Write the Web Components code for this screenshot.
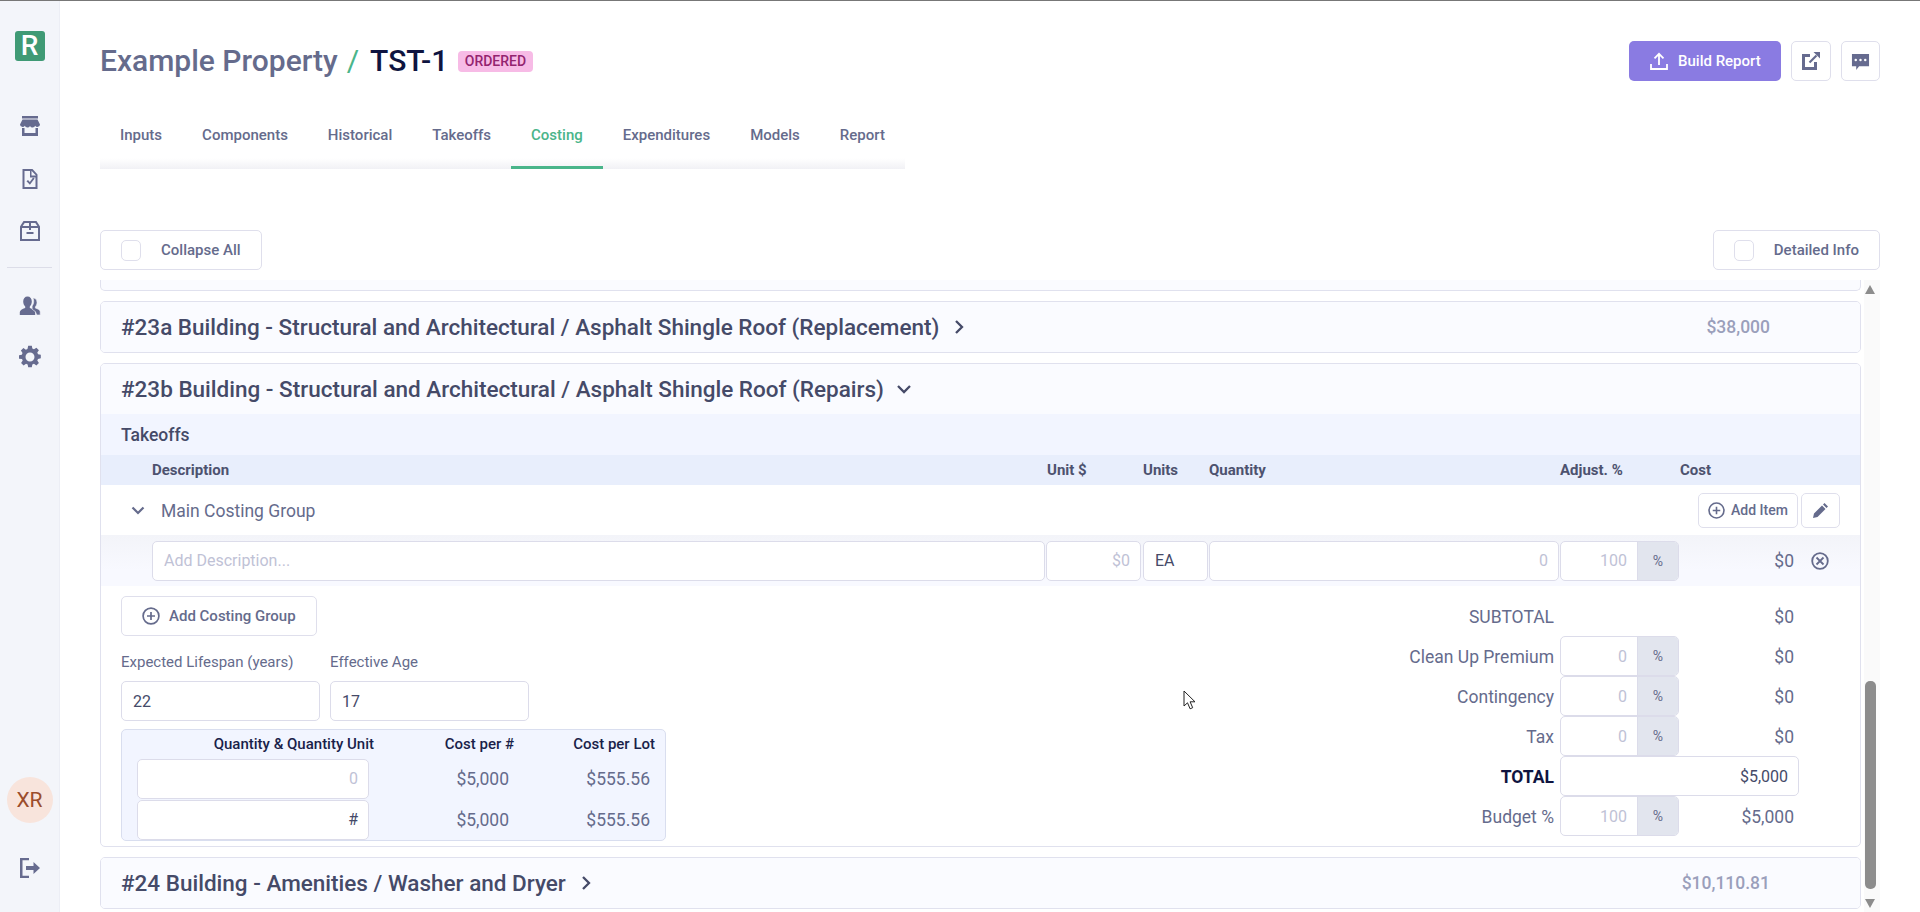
<!DOCTYPE html>
<html lang="en"><head><meta charset="utf-8"><title>Costing</title>
<style>
html,body{margin:0;height:100%;overflow:hidden;background:#fff;font-family:Roboto,"Liberation Sans",sans-serif;color:#656b8c}
</style></head>
<body>
<rs-app></rs-app>
<script>
const ICON={
store:'<path d="M4 2h16v2.500H4z"/><path d="M4.500 5.500h15L22 10.500a2.600 2.600 0 0 1-4.800 1.200A2.800 2.800 0 0 1 14.500 13.500 2.800 2.800 0 0 1 12 12a2.800 2.800 0 0 1-2.500 1.500 2.800 2.800 0 0 1-2.700-1.800A2.600 2.600 0 0 1 2 10.500z"/><path fill-rule="evenodd" d="M4 14h2.500v5h11v-5H20v8H4z"/>',
doc:'<path fill-rule="evenodd" d="M4.500 2h10L19.500 7.500V22h-15zM13.500 3.800V8.500h4.500zM6.500 9.500V20h11V10.500h-5.500V4h-5.500z"/><path d="M8.500 14.200l1.500-1.300 1.800 2 3.300-4.400 1.500 1.100-4.700 6.100z"/>',
box:'<path fill-rule="evenodd" d="M5.500 2h13L22 7.500V22H2V7.500zM6.700 4L4.600 7H11V4zM13 4v3h6.400l-2.100-3zM4 9v11h16V9h-7v2h-2V9z"/><path d="M8.500 13h7v2h-7z"/>',
users:'<path d="M9.500 2.500c2.700 0 4.300 2.100 4.300 5 0 2.200-.9 4-2 5v1.600c3 .8 5.400 2.400 5.400 4.200V21H1.800v-2.700c0-1.800 2.400-3.400 5.400-4.200v-1.600c-1.100-1-2-2.800-2-5 0-2.900 1.700-5 4.300-5z"/><path d="M15.500 4c2.200.2 3.500 2 3.500 4.400 0 1.900-.7 3.400-1.600 4.300v1.400c2.500.7 4.800 2.100 4.800 3.700V21h-3.400l-1.500-3.400-3.200-2.400V12c1-1.200 1.600-2.900 1.600-4.600 0-1.300-.2-2.400-.7-3.400z" stroke="#f3f5fa" stroke-width=".6"/>',
cog:'<path fill-rule="evenodd" d="M10 1.500h4l.6 3.100 1.800.8 2.700-1.800 2.800 2.800-1.800 2.700.8 1.800 3.100.6v4l-3.100.6-.8 1.800 1.800 2.700-2.800 2.800-2.700-1.800-1.800.8-.6 3.100h-4l-.6-3.100-1.800-.8-2.700 1.800-2.800-2.800 1.800-2.700-.8-1.800L-.2 16v-4l3.100-.6.8-1.800-1.800-2.700 2.800-2.800 2.700 1.800 1.800-.8zM12 9a5 5 0 1 0 0 10 5 5 0 0 0 0-10z" transform="translate(1.200 -.6) scale(.9)"/>',
logout:'<path d="M2 2h9v2.200H4.500v15.600H11V22H2z"/><path d="M15.500 6l6.500 6-6.500 6v-4H8v-4h7.500z"/>'
};
const svg=(n,s)=>`<svg width="${s}" height="${s}" viewBox="0 0 24 24" fill="currentColor" aria-hidden="true">${ICON[n]}</svg>`;
const PLUS=s=>`<svg width="${s}" height="${s}" viewBox="0 0 18 18" fill="none" stroke="currentColor" stroke-width="1.700" aria-hidden="true"><circle cx="9" cy="9" r="7.900"/><path d="M9 5v8M5 9h8"/></svg>`;
const def=(name,html)=>customElements.define(name,class extends HTMLElement{
  constructor(){super();this.attachShadow({mode:'open'});}
  connectedCallback(){if(this._d)return;this._d=1;this.shadowRoot.innerHTML=typeof html==='function'?html(this):html;}
});

def('rs-sidebar',`<style>
:host{display:flex;flex-direction:column;align-items:center;width:59px;flex:none;background:#f3f5fa;border-right:1px solid #eceef5;color:#666b8f;height:100%}
.logo{width:30px;height:30px;border-radius:3px;background:#3f9a75;color:#fff;font:500 28px/30px Roboto,sans-serif;text-align:center;margin-top:30px}
.i{display:flex;height:24px}
hr{width:45px;height:1px;border:0;background:#dcdde8;margin:0}
.av{width:46px;height:46px;border-radius:50%;background:#f8e4dc;color:#9b4d2c;font:400 21px/46px Roboto,sans-serif;text-align:center;margin-top:auto}
</style>
<div class="logo">R</div>
<div class="i" style="margin-top:53px">${svg('store',24)}</div>
<div class="i" style="margin-top:29px">${svg('doc',24)}</div>
<div class="i" style="margin-top:28px">${svg('box',24)}</div>
<hr style="margin-top:24px">
<div class="i" style="margin-top:26px">${svg('users',24)}</div>
<div class="i" style="margin-top:27px">${svg('cog',24)}</div>
<div class="av">XR</div>
<div class="i" style="margin-top:33px;margin-bottom:32px">${svg('logout',24)}</div>`);

def('rs-header',`<style>
:host{display:flex;align-items:center;height:40px}
.t{font:500 30px/40px Roboto,sans-serif;color:#656b8c;white-space:nowrap}
.s{color:#4ab58a;font-weight:400;margin:0 11px 0 9px}
.d{color:#0f1440}
.b{margin-left:10px;background:#f7bbe6;color:#93246f;font:500 14px/21px Roboto,sans-serif;height:21px;padding:0 6.500px;border-radius:4px}
.r{margin-left:auto;display:flex;gap:10px}
.p{display:flex;align-items:center;gap:9px;height:40px;width:152px;box-sizing:border-box;padding-left:20px;background:#8a7be2;color:#fff;border-radius:5px;font:500 15px Roboto,sans-serif}
.k{width:40px;height:40px;box-sizing:border-box;border:1px solid #dfdfec;border-radius:5px;display:flex;align-items:center;justify-content:center;color:#666b8f}
</style>
<div class="t">Example Property<span class="s">/</span><span class="d">TST-1</span></div><span class="b">ORDERED</span>
<div class="r"><div class="p"><svg width="20" height="20" viewBox="0 0 20 20" fill="none" stroke="#fff" stroke-width="1.800"><path d="M10 14V3M5.500 7.300L10 2.800l4.500 4.500M2 13v5h16v-5"/></svg>Build Report</div>
<div class="k"><svg width="20" height="20" viewBox="0 0 20 20" fill="currentColor"><path fill-rule="evenodd" d="M1 3h8v3H4v10h9v-5h3v8H1z"/><path d="M12.500 1H19v6.500z"/><path d="M8.500 11.500L15.500 4.500" fill="none" stroke="currentColor" stroke-width="2.200"/></svg></div>
<div class="k" style="width:39px"><svg width="19" height="19" viewBox="0 0 20 20" fill="currentColor"><path fill-rule="evenodd" d="M1 2h18v13H8.500l-3 4v-4H1zM5 7.200a1.300 1.300 0 1 0 0 2.600 1.300 1.300 0 0 0 0-2.600zm5 0a1.300 1.300 0 1 0 0 2.600 1.300 1.300 0 0 0 0-2.600zm5 0a1.300 1.300 0 1 0 0 2.600 1.300 1.300 0 0 0 0-2.600z"/></svg></div></div>`);

def('rs-tabs',()=>`<style>
:host{display:flex;width:805px;height:67px;margin-top:21px;background:linear-gradient(#fff 0,#fff 84%,#f1f1f5 100%)}
div{padding:0 20px;font:500 15px/66px Roboto,sans-serif;color:#656b8c;box-sizing:border-box;height:67px}
.a{color:#4ab58a;border-bottom:3px solid #4ab58a}
</style>${['Inputs','Components','Historical','Takeoffs','Costing','Expenditures','Models','Report'].map(t=>`<div class="${t=='Costing'?'a':''}">${t}</div>`).join('')}`);

def('rs-check',`<style>
:host{display:flex;align-items:center;height:40px;box-sizing:border-box;border:1px solid #dfdfec;border-radius:5px;padding:0 20px;font:500 15px Roboto,sans-serif;color:#656b8c;gap:20px;background:#fff}
i{display:block;width:20px;height:21px;box-sizing:border-box;border:1px solid #dfdfec;border-radius:5px}
</style><i></i><slot></slot>`);

def('rs-toolbar',`<style>:host{display:flex;justify-content:space-between;margin-top:61px}</style><slot></slot>`);

def('rs-scrollbar',`<style>
:host{display:flex;flex-direction:column;align-items:flex-start;width:19px;flex:none;background:linear-gradient(90deg,#fff 3px,#fafafa 3px);padding:5px 0 0 4px;box-sizing:border-box;height:632px}
.ar{width:0;height:0;border-left:5.500px solid transparent;border-right:5.500px solid transparent}
.u{border-bottom:9px solid #8c8c8c}
.d{border-top:9px solid #8c8c8c;margin-top:10px}
.t{width:11px;height:208px;border-radius:5px;background:#8c8c8c;margin-top:387px}
</style><div class="ar u"></div><div class="t"></div><div class="ar d"></div>`);

def('rs-card',e=>{
 const open=e.hasAttribute('open');
 const chev=open?'<path d="M2 5l6 6 6-6"/>':'<path d="M5 2l6 6-6 6"/>';
 return `<style>
:host{display:block;border:1px solid #e0e1ee;border-radius:5px;overflow:hidden;background:#fff}
header{display:flex;align-items:center;height:50px;background:#fafbff;padding-left:20px;font:500 22.500px Roboto,sans-serif;color:#454a68;white-space:nowrap}
svg{margin-left:12px}
.am{margin-left:auto;margin-right:90px;font:500 17.500px Roboto,sans-serif;color:#9a9fbb}
</style><header>${e.getAttribute('heading')}<svg width="16" height="16" viewBox="0 0 16 16" fill="none" stroke="#454a68" stroke-width="2.300">${chev}</svg>${e.getAttribute('amount')?`<span class="am">${e.getAttribute('amount')}</span>`:''}</header><slot></slot>`;
});

def('rs-field',e=>`<style>
:host{display:flex;height:40px;box-sizing:border-box;border:1px solid #dcdcea;border-radius:5px;background:#fff;overflow:hidden;font:400 16px Roboto,sans-serif;color:#454a68}
.v{flex:1;display:flex;align-items:center;padding:0 10px 0 11px;min-width:0}
:host([right]) .v{justify-content:flex-end}
:host([ph]) .v{color:#bfc2d6}
.x{width:41px;flex:none;background:#e2e5ee;border-left:1px solid #dcdcea;box-sizing:border-box;display:flex;align-items:center;justify-content:center;font-size:14px;color:#656b8c}
</style><div class="v"><slot></slot></div>${e.hasAttribute('pct')?'<div class="x">%</div>':''}`);

def('rs-takeoffs',()=>`<style>
:host{display:block}
.band{height:41px;background:#f2f5ff;padding-left:20px;font:500 17.500px/43px Roboto,sans-serif;color:#454a68}
.g{display:grid;grid-template-columns:894px 97px 66px 351px 120px 120px 1fr;padding-left:51px}
.h{height:30px;background:#e8eefc;font:700 15px/30px Roboto,sans-serif;color:#4d526f;align-items:center}
.gr{display:flex;align-items:center;height:50px;font:400 17.500px Roboto,sans-serif;color:#656b8c}
.gr svg.c{margin:0 16px 0 30px}
.gr .n{padding-top:2px}
.bt{margin-left:auto;display:flex;gap:3px;margin-right:20px}
.b{height:35px;box-sizing:border-box;border:1px solid #dfdfec;border-radius:5px;display:flex;align-items:center;justify-content:center;gap:6px;font:500 14px Roboto,sans-serif;background:#fff}
.row{height:51px;align-items:center;background:linear-gradient(#f3f4f9,#f8f9ff 70%);box-sizing:border-box}
.row rs-field{margin-right:1px}
.cost{font:400 17.500px Roboto,sans-serif;text-align:right;padding-right:6px}
.cl{margin-left:11px;display:flex}
.u{margin-right:2px !important}
</style>
<div class="band">Takeoffs</div>
<div class="g h"><span>Description</span><span style="padding-left:1px">Unit $</span><span>Units</span><span>Quantity</span><span>Adjust. %</span><span>Cost</span></div>
<div class="gr"><svg class="c" width="14" height="14" viewBox="0 0 14 14" fill="none" stroke="#656b8c" stroke-width="2.200"><path d="M1.500 4.500L7 10l5.500-5.500"/></svg><span class="n">Main Costing Group</span>
<div class="bt"><div class="b" style="width:100px">${PLUS(17)}Add Item</div><div class="b" style="width:39px"><svg width="17" height="17" viewBox="0 0 17 17" fill="currentColor"><path d="M1 16l1-4.500 8-8 3.500 3.500-8 8zM11 2.500L12.500 1 16 4.500 14.500 6z"/></svg></div></div></div>
<div class="g row"><rs-field ph>Add Description...</rs-field><rs-field ph right class="u">$0</rs-field><rs-field>EA</rs-field><rs-field ph right>0</rs-field><rs-field ph right pct>100</rs-field><div class="cost">$0</div>
<div class="cl"><svg width="18" height="18" viewBox="0 0 18 18" fill="none" stroke="#656b8c" stroke-width="1.800"><circle cx="9" cy="9" r="7.800"/><path d="M5.500 5.500l7 7M12.500 5.500l-7 7"/></svg></div></div>
<slot></slot>`);

def('rs-summary',()=>`<style>
:host{display:grid;grid-template-columns:206px 119px 120px;grid-auto-rows:40px;align-items:center;margin-left:auto;margin-right:61px;font:400 17.500px Roboto,sans-serif;color:#656b8c;width:445px;align-self:flex-start}
.l{text-align:right;padding:2px 6px 0 0;grid-column:1;white-space:nowrap}
.a{grid-column:3;text-align:right;padding:2px 5px 0 0}
.tl{font-weight:700;color:#0f1440}
.tot{grid-column:2 / span 2}
</style>
<div class="l">SUBTOTAL</div><div class="a">$0</div>
<div class="l">Clean Up Premium</div><rs-field ph right pct>0</rs-field><div class="a">$0</div>
<div class="l">Contingency</div><rs-field ph right pct>0</rs-field><div class="a">$0</div>
<div class="l">Tax</div><rs-field ph right pct>0</rs-field><div class="a">$0</div>
<div class="l tl">TOTAL</div><rs-field right class="tot">$5,000</rs-field>
<div class="l">Budget %</div><rs-field ph right pct>100</rs-field><div class="a">$5,000</div>`);

def('rs-footer',()=>`<style>
:host{display:flex;padding:10px 0 5px 20px}
.left{width:545px;flex:none}
.add{display:flex;align-items:center;gap:9px;width:196px;height:40px;box-sizing:border-box;border:1px solid #dfdfec;border-radius:5px;padding-left:20px;font:500 15px Roboto,sans-serif}
.f2{display:grid;grid-template-columns:199px 199px;column-gap:10px;margin-top:16px;font:400 15px/20px Roboto,sans-serif}
.f2 rs-field{margin-top:9px}
.q{margin-top:8px;background:#f2f5ff;border:1px solid #d9deef;border-radius:5px;height:112px;box-sizing:border-box;display:grid;grid-template-columns:252px 140px 141px;grid-template-rows:28px 41px 41px;align-items:center;font:400 17.500px Roboto,sans-serif}
.q b{font:500 15px Roboto,sans-serif;color:#1a1f4a;text-align:right;white-space:nowrap}
.q span{text-align:right;padding-right:5px}
.q rs-field{margin-left:15px;width:232px}
</style>
<div class="left"><div class="add">${PLUS(18)}Add Costing Group</div>
<div class="f2"><span>Expected Lifespan (years)</span><span>Effective Age</span><rs-field>22</rs-field><rs-field>17</rs-field></div>
<div class="q"><b>Quantity &amp; Quantity Unit</b><b>Cost per #</b><b>Cost per Lot</b>
<rs-field right ph>0</rs-field><span>$5,000</span><span>$555.56</span>
<rs-field right>#</rs-field><span>$5,000</span><span>$555.56</span></div></div><rs-summary></rs-summary>`);

def('rs-list',`<style>
:host{display:flex;height:632px;margin-top:10px;overflow:hidden}
.c{flex:1;display:flex;flex-direction:column;gap:10px;min-width:0}
.stub{height:10px;flex:none;border:1px solid #e0e1ee;border-top:0;border-radius:0 0 5px 5px;background:#fafbff}
</style><div class="c"><div class="stub"></div><slot></slot></div><rs-scrollbar></rs-scrollbar>`);

def('rs-app',`<style>
:host{display:flex;height:912px;box-sizing:border-box;border-top:1px solid #777;position:relative}
main{flex:1;min-width:0;padding:40px 40px 0 40px}
svg.cur{position:absolute;left:1183px;top:689px}
</style>
<rs-sidebar></rs-sidebar>
<main>
<rs-header></rs-header>
<rs-tabs></rs-tabs>
<rs-toolbar><rs-check>Collapse All</rs-check><rs-check>Detailed Info</rs-check></rs-toolbar>
<rs-list>
<rs-card heading="#23a Building - Structural and Architectural / Asphalt Shingle Roof (Replacement)" amount="$38,000"></rs-card>
<rs-card open heading="#23b Building - Structural and Architectural / Asphalt Shingle Roof (Repairs)"><rs-takeoffs><rs-footer></rs-footer></rs-takeoffs></rs-card>
<rs-card heading="#24 Building - Amenities / Washer and Dryer" amount="$10,110.81"></rs-card>
</rs-list>
</main>
<svg class="cur" width="14" height="20" viewBox="0 0 14 20"><path d="M1 1v15l3.500-3.200 2.600 6 2.600-1.100-2.600-5.900H12z" fill="#fff" stroke="#222" stroke-width="1"/></svg>`);
</script>
</body></html>
